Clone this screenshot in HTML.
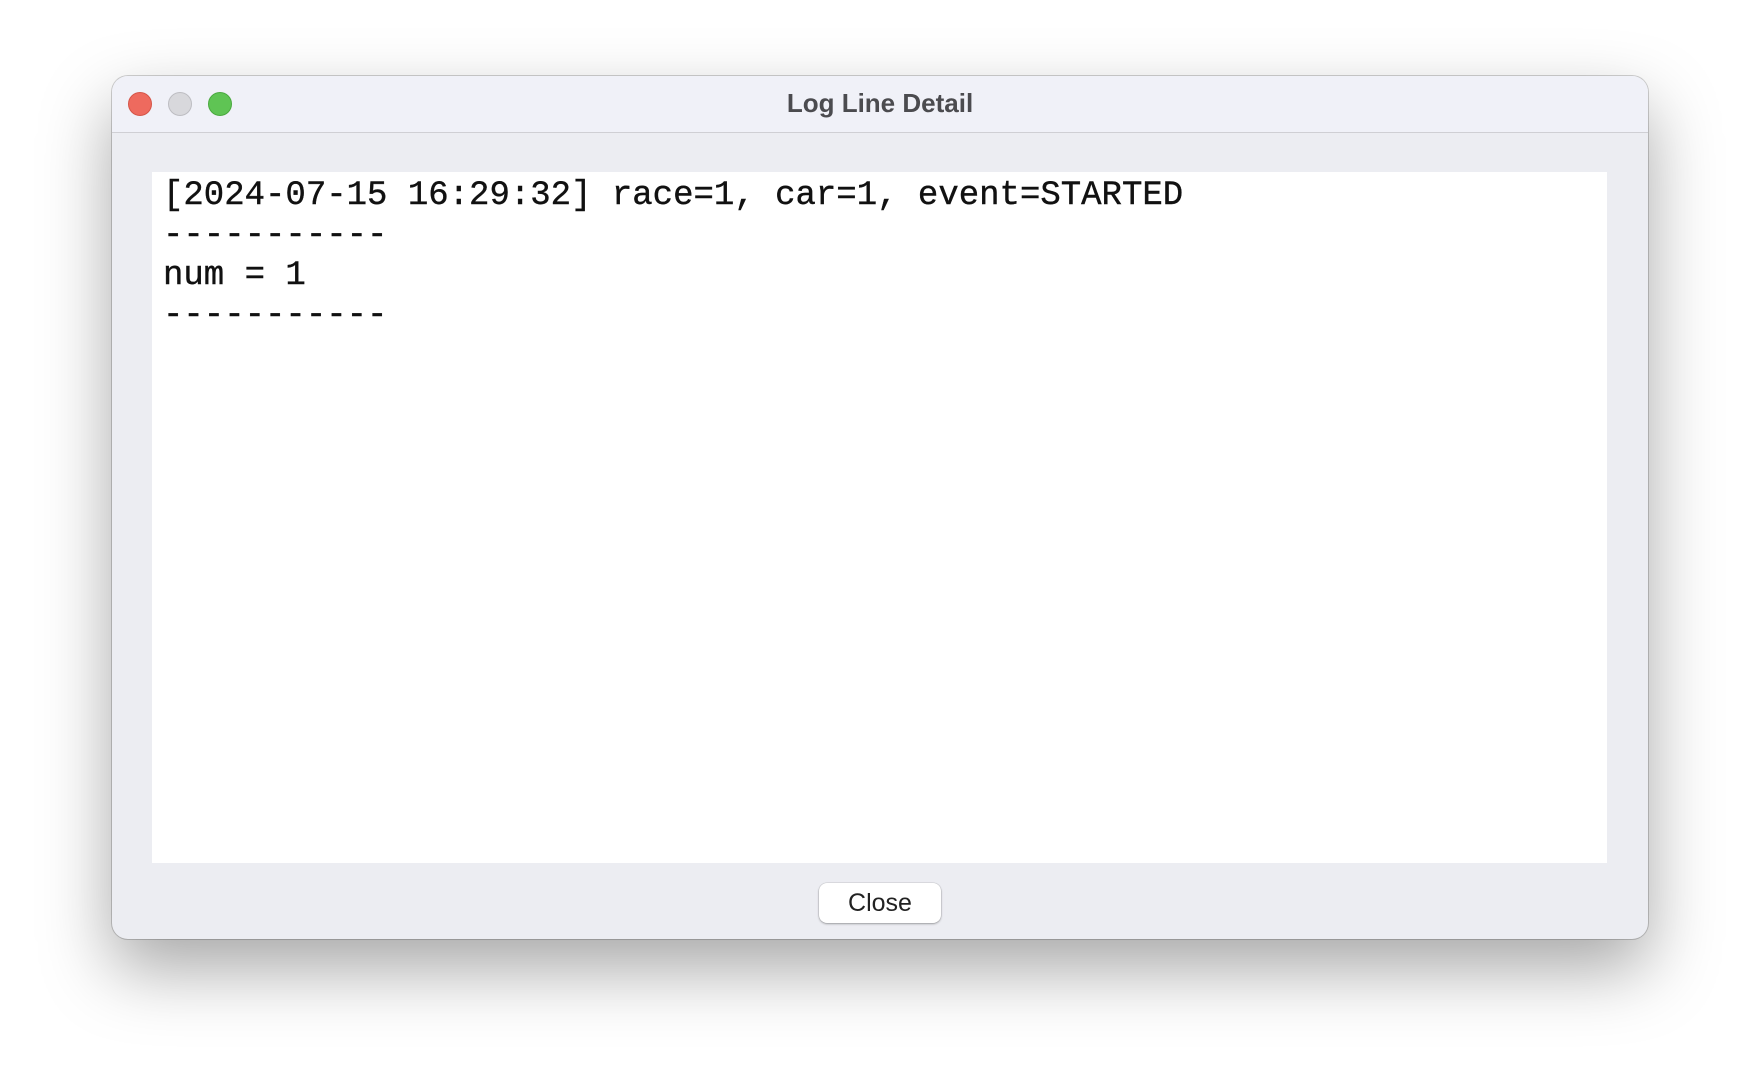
<!DOCTYPE html>
<html><head><style>
html,body{margin:0;padding:0;width:1760px;height:1088px;background:#fff;overflow:hidden}
.win{position:absolute;left:112px;top:76px;width:1536px;height:863px;border-radius:16px;background:#ecedf2;
box-shadow:0 30px 70px rgba(0,0,0,0.35),0 0 0 1px rgba(0,0,0,0.18);overflow:hidden}
.tb{position:absolute;left:0;top:0;width:100%;height:56px;background:#f0f1f8;border-bottom:1px solid #cfcfd4}
.dot{position:absolute;top:16px;width:24px;height:24px;border-radius:50%;box-sizing:border-box}
.title{position:absolute;left:0;right:0;top:12px;text-align:center;font:bold 26px "Liberation Sans",sans-serif;color:#4b4b4f}
.txt{position:absolute;left:40px;top:96px;width:1455px;height:691px;background:#fff;box-sizing:border-box;padding:4px 11px;
font:34px/40px "Liberation Mono",monospace;color:#111;white-space:pre;-webkit-text-stroke:0.4px #111}
.btn{position:absolute;left:707px;top:807px;width:122px;height:40px;background:#fff;border-radius:8px;
box-shadow:0 1px 2px rgba(0,0,0,0.3),0 0 0 0.5px rgba(0,0,0,0.12);font:25px/40px "Liberation Sans",sans-serif;text-align:center;color:#222}
</style></head><body>
<div class="win">
<div class="tb">
<div class="dot" style="left:16px;background:#ee6a5e;border:1px solid #d55548"></div>
<div class="dot" style="left:56px;background:#d8d8dc;border:1px solid #bdbdc2"></div>
<div class="dot" style="left:96px;background:#5fc454;border:1px solid #4aa93f"></div>
<div class="title">Log Line Detail</div>
</div>
<div class="txt">[2024-07-15 16:29:32] race=1, car=1, event=STARTED
-----------
num = 1
-----------</div>
<div class="btn">Close</div>
</div>
</body></html>
